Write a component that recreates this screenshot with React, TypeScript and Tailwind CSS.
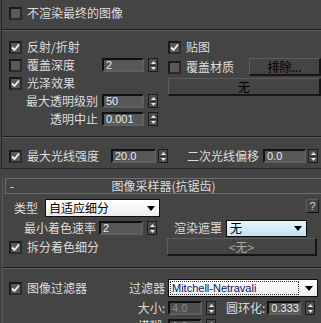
import React from 'react';

const cjk = "font-['Noto_Sans_CJK_SC','Liberation_Sans',sans-serif]";

function Check({ on }: { on?: boolean }) {
  return (
    <span className="w-[13px] h-[13px] shrink-0 border-2 border-[#1a1a1a] border-b-[#2c2c2c] border-r-[#2c2c2c] bg-[#595959] flex items-center justify-center">
      {on && (
        <svg width="9" height="9" viewBox="0 0 9 9">
          <path d="M1 4.5 L3.5 7 L8 1.5" stroke="#f2f2f2" strokeWidth="1.8" fill="none" />
        </svg>
      )}
    </span>
  );
}

function CheckRow({ on, label, className = '' }: { on?: boolean; label: string; className?: string }) {
  return (
    <div className={`flex items-center gap-[5px] ${className}`}>
      <Check on={on} />
      <span>{label}</span>
    </div>
  );
}

function Field({ value, w, disabled }: { value: string; w: string; disabled?: boolean }) {
  return (
    <span
      className={`h-[14px] ${w} shrink-0 border-2 border-[#111] border-b-[#5f5f5f] border-r-[#5f5f5f] ${
        disabled ? 'bg-[#4e4e4e] text-[#8c8c8c]' : 'bg-[#575757] text-[#e4ebf6]'
      } font-['Liberation_Sans',sans-serif] text-[11px] pl-[2px] flex items-center`}
    >
      {value}
    </span>
  );
}

function Spinner() {
  return (
    <span className="w-[10px] h-[14px] shrink-0 border border-[#1b1b1b] bg-[#4d4d4d] flex flex-col items-center justify-center gap-[1px]">
      <svg width="5" height="3" viewBox="0 0 5 3">
        <path d="M0 3 L2.5 0 L5 3 Z" fill="#e6e6e6" />
      </svg>
      <span className="w-[6px] h-px bg-[#2a2a2a]" />
      <svg width="5" height="3" viewBox="0 0 5 3">
        <path d="M0 0 L5 0 L2.5 3 Z" fill="#e6e6e6" />
      </svg>
    </span>
  );
}

function Spin({ value, w, gap, disabled }: { value: string; w: string; gap: string; disabled?: boolean }) {
  return (
    <div className={`flex items-center ${gap}`}>
      <Field value={value} w={w} disabled={disabled} />
      <Spinner />
    </div>
  );
}

function Btn({ label, className }: { label: string; className: string }) {
  return (
    <span
      className={`h-[18px] shrink-0 border border-[#5c5c5c] border-b-2 border-r-2 border-b-[#161616] border-r-[#161616] bg-[#444] flex items-center justify-center ${className}`}
    >
      {label}
    </span>
  );
}

function Arrow() {
  return (
    <svg width="8" height="5" viewBox="0 0 8 5" className="shrink-0">
      <path d="M0 0 L8 0 L4 5 Z" fill="#000" />
    </svg>
  );
}

function Sep({ className = '' }: { className?: string }) {
  return <div className={`h-[2px] border-t border-[#1e1e1e] border-b border-b-[#5e5e5e] ${className}`} />;
}

export default function App() {
  return (
    <div className={`w-[321px] h-[323px] overflow-hidden bg-[#444444] text-[#dcdcdc] text-[12px] leading-none ${cjk}`}>
      {/* top group */}
      <div className="ml-px h-[169px] border-l border-b border-[#262626]">
        <div className="h-[29px] pt-[4px]">
          <CheckRow on={false} label="不渲染最终的图像" className="h-[18px] pl-[7px]" />
        </div>
        <Sep />

        <div className="flex pt-[7px]">
          <div className="w-[166px] flex flex-col">
            <CheckRow on label="反射/折射" className="h-[18px] pl-[7px]" />
            <div className="h-[18px] flex items-center">
              <CheckRow label="覆盖深度" className="w-[100px] pl-[7px]" />
              <Spin value="2" w="w-[42px]" gap="gap-[4px]" />
            </div>
            <CheckRow on label="光泽效果" className="h-[18px] pl-[7px]" />
            <div className="h-[18px] flex items-center">
              <span className="w-[96px] text-right">最大透明级别</span>
              <span className="ml-[4px]">
                <Spin value="50" w="w-[42px]" gap="gap-[4px]" />
              </span>
            </div>
            <div className="h-[18px] flex items-center">
              <span className="w-[96px] text-right">透明中止</span>
              <span className="ml-[4px]">
                <Spin value="0.001" w="w-[42px]" gap="gap-[4px]" />
              </span>
            </div>
          </div>

          <div className="flex-1 flex flex-col">
            <CheckRow on label="贴图" className="h-[18px]" />
            <div className="mt-[2px] h-[18px] flex items-center">
              <CheckRow label="覆盖材质" className="w-[81px]" />
              <Btn label="排除..." className="w-[72px] text-black" />
            </div>
            <Btn label="无" className="mt-[2px] w-[153px] text-black" />
          </div>
        </div>

        <Sep className="mt-[8px]" />

        <div className="pt-[9px] h-[27px] flex items-center">
          <CheckRow on label="最大光线强度" className="w-[109px] pl-[7px]" />
          <Spin value="20.0" w="w-[45px]" gap="gap-[2px]" />
          <span className="ml-[19px] w-[76px]">二次光线偏移</span>
          <Spin value="0.0" w="w-[43px]" gap="gap-[2px]" />
        </div>
      </div>

      {/* image sampler rollout */}
      <div className="mt-[9px] ml-[2px] border-l border-[#5a5a5a]">
        <div className="ml-[2px] h-[16px] border border-r-0 border-[#6c6c6c] flex items-center pl-[4px]">
          <span className="w-[10px]">-</span>
          <span className="flex-1 text-center pr-[14px]">图像采样器(抗锯齿)</span>
        </div>

        <div className="mt-[5px] h-[18px] flex items-start">
          <span className="h-[18px] flex items-center ml-[11px] w-[30px]">类型</span>
          <span className="ml-[1px] w-[115px] h-[18px] border border-[#0e0e0e] bg-gradient-to-b from-white to-[#ececec] text-black flex items-center justify-between pl-[3px] pr-[4px]">
            <span>自适应细分</span>
            <Arrow />
          </span>
          <span className="ml-auto mr-[2px] w-[13px] h-[14px] border border-[#5c5c5c] border-b-[#151515] border-r-[#151515] bg-[#444] text-[#c8d0e6] font-['Liberation_Sans',sans-serif] text-[11px] flex items-center justify-center">
            ?
          </span>
        </div>

        <div className="mt-[2px] h-[18px] flex items-center">
          <span className="w-[93px] text-right">最小着色速率</span>
          <span className="ml-[3px]">
            <Spin value="2" w="w-[44px]" gap="gap-[4px]" />
          </span>
          <span className="ml-[17px]">渲染遮罩</span>
          <span className="ml-[4px] w-[81px] h-[17px] border border-[#0e0e0e] bg-gradient-to-b from-[#eaf6fd] to-[#bfe2f5] text-black flex items-center justify-between pl-[3px] pr-[4px]">
            <span>无</span>
            <Arrow />
          </span>
        </div>

        <div className="mt-px h-[18px] flex items-center">
          <CheckRow on label="拆分着色细分" className="w-[164px] pl-[6px]" />
          <Btn label="<无>" className="w-[150px] text-[#a9a9a9]" />
        </div>

        <Sep className="mt-[11px] -ml-px" />

        <div className="mt-[10px] h-[18px] flex items-center">
          <CheckRow on label="图像过滤器" className="w-[126px] pl-[6px]" />
          <span className="w-[39px]">过滤器</span>
          <span className="w-[150px] h-[18px] border border-[#0e0e0e] bg-gradient-to-b from-white to-[#ececec] flex items-center justify-between pl-[1px] pr-[4px]">
            <span className="h-[14px] flex-1 mr-[6px] border border-dotted border-[#333] text-[#0a1464] font-['Liberation_Sans',sans-serif] text-[11px] flex items-center pl-px">
              Mitchell-Netravali
            </span>
            <Arrow />
          </span>
        </div>

        <div className="mt-[4px] h-[14px] flex items-center">
          <span className="w-[162px] text-right">大小:</span>
          <span className="ml-[3px]">
            <Spin value="4.0" w="w-[34px]" gap="gap-[4px]" disabled />
          </span>
          <span className="ml-[10px]">圆环化:</span>
          <span className="ml-[2px]">
            <Spin value="0.333" w="w-[34px]" gap="gap-[4px]" />
          </span>
        </div>

        <div className="mt-[4px] h-[14px] flex items-center">
          <span className="w-[162px] text-right">模糊:</span>
          <span className="ml-[3px]">
            <Spin value="1.0" w="w-[34px]" gap="gap-[4px]" disabled />
          </span>
        </div>
      </div>
    </div>
  );
}
